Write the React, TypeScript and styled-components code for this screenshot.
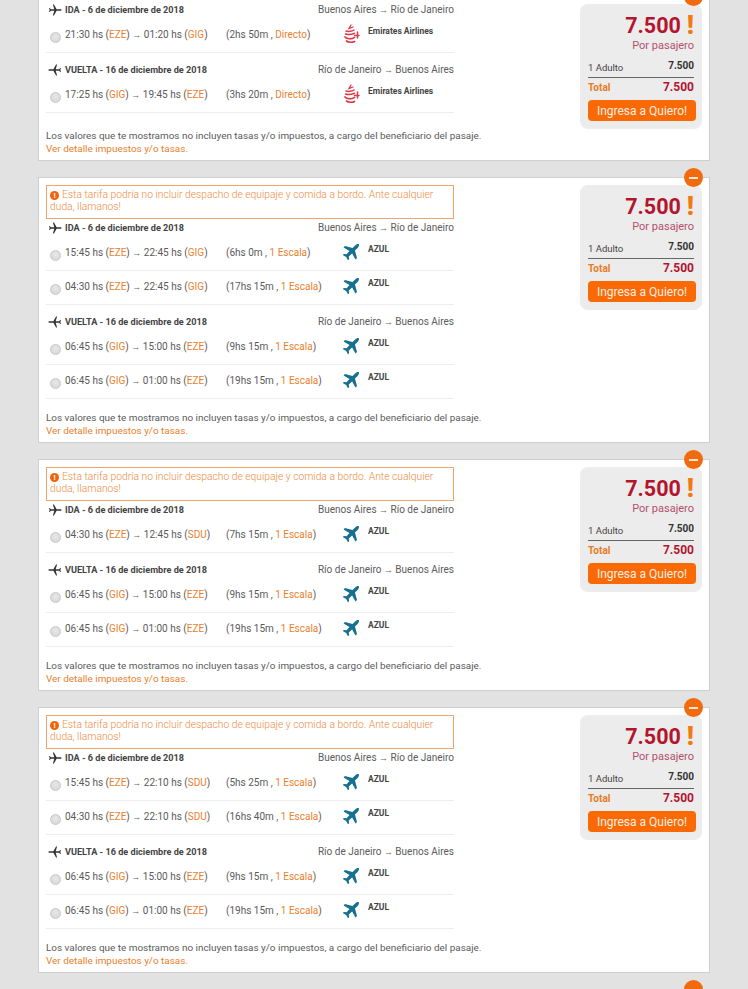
import * as React from 'react';
import styled, { createGlobalStyle } from 'styled-components';

const GlobalStyle = createGlobalStyle`
  html, body {
    margin: 0;
    padding: 0;
    background: #e2e2e2;
  }
  #root {
    height: 989px;
    overflow: hidden;
  }
`;

const List = styled.div`
  display: flex;
  flex-direction: column;
  gap: 16px;
  margin-top: -4px;
  padding: 0 38px;
  font-family: Roboto, "Liberation Sans", sans-serif;
  color: #4a4a4a;
`;

const Card = styled.div`
  position: relative;
  display: flex;
  justify-content: space-between;
  box-sizing: border-box;
  width: 672px;
  background: #fff;
  border: 1px solid #cfcfcf;
`;

const Toggle = styled.div`
  position: absolute;
  top: -10px;
  right: 6px;
  display: flex;
  align-items: center;
  justify-content: center;
  width: 19px;
  height: 19px;
  border-radius: 50%;
  background: #f26a0e;

  &::before {
    content: '';
    width: 9px;
    height: 2px;
    background: #ffe6d4;
  }
`;

const Main = styled.div<{ $bare?: boolean }>`
  width: 408px;
  margin-left: 7px;
  padding-top: ${(p) => (p.$bare ? '4px' : '7px')};
`;

const Notice = styled.div`
  box-sizing: border-box;
  height: 34px;
  padding: 3px 3px 0;
  border: 1px solid #f2a468;
  font-size: 10.3px;
  font-weight: 300;
  line-height: 12px;
  color: #ee8a3e;
`;

const NoticeIcon = styled.span`
  display: inline-block;
  width: 9px;
  height: 9px;
  margin-right: 3px;
  border-radius: 50%;
  background: #f0630a;
  color: #fff;
  font-size: 8px;
  font-weight: 700;
  line-height: 9px;
  text-align: center;
`;

const Section = styled.div`
  & + & {
    margin-top: 8px;
  }
`;

const LegHeader = styled.div`
  display: flex;
  align-items: center;
  justify-content: space-between;
  height: 18px;
`;

const LegTitle = styled.div`
  display: flex;
  align-items: center;
  gap: 3px;
  padding-left: 2px;
  font-size: 9.15px;
  font-weight: 700;
  color: #444;
`;

const Route = styled.div`
  margin-top: -1px;
  font-size: 10px;
  color: #5c5c5c;
`;

const Arrow = styled.span`
  font-size: 9px;
  color: #666;
`;

const DirectionPlane = styled.svg<{ $back?: boolean }>`
  width: 14px;
  height: 14px;
  fill: #333;
  transform: ${(p) => (p.$back ? 'scaleX(-1)' : 'none')};
`;

const Row = styled.div`
  display: flex;
  box-sizing: border-box;
  height: 34px;
  border-bottom: 1px solid #eeeeee;
`;

const Radio = styled.span`
  flex: none;
  box-sizing: border-box;
  width: 11px;
  height: 11px;
  margin: 13px 4px 0 4px;
  border: 1px solid #c8c8c8;
  border-radius: 50%;
  background: radial-gradient(circle at 50% 40%, #e8e8e8, #d4d4d4);
`;

const Times = styled.div`
  flex: none;
  width: 161px;
  padding-top: 9px;
  font-size: 10px;
  line-height: 14px;
  color: #5a5a5a;
  white-space: nowrap;
`;

const Duration = styled(Times)`
  width: 114px;
`;

const Highlight = styled.span`
  color: #e97f2e;
`;

const LogoBox = styled.div`
  flex: none;
  display: flex;
  align-items: center;
  justify-content: center;
  width: 22px;
  height: 22px;
  margin-top: 4px;
`;

const AirlineName = styled.div`
  margin: 6px 0 0 6px;
  font-size: 8.5px;
  font-weight: 700;
  line-height: 12px;
  color: #444;
  white-space: nowrap;
`;

const Disclaimer = styled.div<{ $bare?: boolean }>`
  margin-top: ${(p) => (p.$bare ? '16px' : '12px')};
  padding-bottom: 5px;
  font-size: 9.93px;
  line-height: 13px;
  color: #5a5a5a;
  white-space: nowrap;
`;

const DetailLink = styled.div`
  color: #e97f2e;
`;

const PriceBox = styled.div`
  flex: none;
  align-self: flex-start;
  box-sizing: border-box;
  width: 122px;
  height: 125px;
  margin: 7px 7px 0 0;
  padding: 7px 8px 0 8px;
  border-radius: 8px;
  background: #ececec;
`;

const BigPrice = styled.div`
  display: flex;
  align-items: center;
  justify-content: flex-end;
  gap: 6px;
  height: 28px;
  font-size: 21.5px;
  font-weight: 700;
  color: #b3152f;
`;

const Bang = styled.span`
  font-size: 26px;
  font-weight: 900;
  color: #f2790f;
`;

const PerPassenger = styled.div`
  font-size: 11px;
  line-height: 13px;
  text-align: right;
  color: #b5506c;
`;

const Line = styled.div<{ $total?: boolean }>`
  display: flex;
  align-items: center;
  justify-content: space-between;
  height: ${(p) => (p.$total ? '18px' : '19px')};
  margin-top: ${(p) => (p.$total ? '0' : '4px')};
  border-bottom: ${(p) => (p.$total ? '0' : '1px solid #666')};
  padding-bottom: ${(p) => (p.$total ? '0' : '2px')};
`;

const LineLabel = styled.span<{ $total?: boolean }>`
  margin-top: ${(p) => (p.$total ? '0' : '4px')};
  font-size: ${(p) => (p.$total ? '10px' : '9.5px')};
  font-weight: ${(p) => (p.$total ? 700 : 400)};
  color: ${(p) => (p.$total ? '#ea7a22' : '#444')};
`;

const LineValue = styled.span<{ $total?: boolean }>`
  font-size: ${(p) => (p.$total ? '12px' : '10px')};
  font-weight: 700;
  color: ${(p) => (p.$total ? '#b3152f' : '#333')};
`;

const BuyButton = styled.button`
  display: block;
  box-sizing: border-box;
  width: 108px;
  height: 21px;
  margin-top: 4px;
  padding: 0;
  border: 0;
  border-radius: 4px;
  background: #f96a06;
  color: #fdeee2;
  font-family: inherit;
  font-size: 12px;
`;

const planePath =
  'M23.5 12c0-.9-1.2-1.4-2.3-1.4h-6.4L10.2 2.5H8.4l2.4 8.1H4.900L3.100 8.400H1.800L2.900 12l-1.100 3.600h1.300l1.800-2.200h5.900l-2.400 8.100h1.800l4.600-8.100h6.400c1.100 0 2.300-.5 2.300-1.400z';

const azulPath =
  'M22.500 1.500c-1.400-.6-3.600.3-5 1.700l-3.500 3.500L4 4 2 6l8 4.500-4 4.500-3.500-.5L1 16l4.500 2.500L8 23l1.500-1.500L9 18l4.500-4 4.500 8 2-2-2.700-10 3.500-3.500c1.400-1.400 2.300-3.600 1.700-5z';

const Direction = ({ back }: { back?: boolean }) => (
  <DirectionPlane $back={back} viewBox="0 0 24 24">
    <path d={planePath} />
  </DirectionPlane>
);

const AzulLogo = () => (
  <svg width="18" height="18" viewBox="0 0 24 24" fill="#17708f">
    <path d={azulPath} />
  </svg>
);

const EmiratesLogo = () => (
  <svg width="17" height="20" viewBox="0 0 17 20" fill="none" stroke="#dc3a48" strokeLinecap="round">
    <path d="M8 1 6 4.500l4-1.500" strokeWidth="1.300" />
    <path d="M3 7c2 .8 6 .4 8-1" strokeWidth="1.500" />
    <path d="M2.500 10c3 1 6 .5 9-.8M14.500 8v6M11.500 11.500h4.500" strokeWidth="1.500" />
    <path d="M2 13c1.500 2.300 7 2.300 9.500.4" strokeWidth="1.700" />
    <path d="M3.500 17c2 1.600 6 1.600 8 .4" strokeWidth="1.700" />
  </svg>
);

const Code = ({ children }: { children: string }) => <>(<Highlight>{children}</Highlight>)</>;

interface IFlight {
  dep: string;
  from: string;
  arr: string;
  to: string;
  time: string;
  stops: string;
}

interface IFare {
  notice: boolean;
  airline: 'emirates' | 'azul';
  ida: IFlight[];
  vuelta: IFlight[];
}

const flight = (dep: string, from: string, arr: string, to: string, time: string, stops = '1 Escala'): IFlight => ({
  dep,
  from,
  arr,
  to,
  time,
  stops,
});

const vueltaAzul = [
  flight('06:45', 'GIG', '15:00', 'EZE', '9hs 15m'),
  flight('06:45', 'GIG', '01:00', 'EZE', '19hs 15m'),
];

const fares: IFare[] = [
  {
    notice: false,
    airline: 'emirates',
    ida: [flight('21:30', 'EZE', '01:20', 'GIG', '2hs 50m', 'Directo')],
    vuelta: [flight('17:25', 'GIG', '19:45', 'EZE', '3hs 20m', 'Directo')],
  },
  {
    notice: true,
    airline: 'azul',
    ida: [
      flight('15:45', 'EZE', '22:45', 'GIG', '6hs 0m'),
      flight('04:30', 'EZE', '22:45', 'GIG', '17hs 15m'),
    ],
    vuelta: vueltaAzul,
  },
  {
    notice: true,
    airline: 'azul',
    ida: [flight('04:30', 'EZE', '12:45', 'SDU', '7hs 15m')],
    vuelta: vueltaAzul,
  },
  {
    notice: true,
    airline: 'azul',
    ida: [
      flight('15:45', 'EZE', '22:10', 'SDU', '5hs 25m'),
      flight('04:30', 'EZE', '22:10', 'SDU', '16hs 40m'),
    ],
    vuelta: vueltaAzul,
  },
  {
    notice: true,
    airline: 'azul',
    ida: [flight('15:45', 'EZE', '22:10', 'SDU', '5hs 25m')],
    vuelta: vueltaAzul,
  },
];

const Leg = ({ title, route, back, flights, airline }: {
  title: string;
  route: [string, string];
  back?: boolean;
  flights: IFlight[];
  airline: IFare['airline'];
}) => (
  <Section>
    <LegHeader>
      <LegTitle><Direction back={back} />{title}</LegTitle>
      <Route>{route[0]} <Arrow>→</Arrow> {route[1]}</Route>
    </LegHeader>
    {flights.map((f, i) => (
      <Row key={i}>
        <Radio />
        <Times>
          {f.dep} hs <Code>{f.from}</Code> <Arrow>→</Arrow> {f.arr} hs <Code>{f.to}</Code>
        </Times>
        <Duration>({f.time} , <Highlight>{f.stops}</Highlight>)</Duration>
        <LogoBox>{airline === 'azul' ? <AzulLogo /> : <EmiratesLogo />}</LogoBox>
        <AirlineName>{airline === 'azul' ? 'AZUL' : 'Emirates Airlines'}</AirlineName>
      </Row>
    ))}
  </Section>
);

const App = () => (
  <>
    <GlobalStyle />
    <List>
      {fares.map((fare, i) => (
        <Card key={i}>
          <Toggle />
          <Main $bare={!fare.notice}>
            {fare.notice && (
              <Notice>
                <NoticeIcon>!</NoticeIcon>
                Esta tarifa podría no incluir despacho de equipaje y comida a bordo. Ante cualquier duda, llamanos!
              </Notice>
            )}
            <Leg
              title="IDA - 6 de diciembre de 2018"
              route={['Buenos Aires', 'Río de Janeiro']}
              flights={fare.ida}
              airline={fare.airline}
            />
            <Leg
              back
              title="VUELTA - 16 de diciembre de 2018"
              route={['Río de Janeiro', 'Buenos Aires']}
              flights={fare.vuelta}
              airline={fare.airline}
            />
            <Disclaimer $bare={!fare.notice}>
              Los valores que te mostramos no incluyen tasas y/o impuestos, a cargo del beneficiario del pasaje.
              <DetailLink>Ver detalle impuestos y/o tasas.</DetailLink>
            </Disclaimer>
          </Main>
          <PriceBox>
            <BigPrice>7.500<Bang>!</Bang></BigPrice>
            <PerPassenger>Por pasajero</PerPassenger>
            <Line>
              <LineLabel>1 Adulto</LineLabel>
              <LineValue>7.500</LineValue>
            </Line>
            <Line $total>
              <LineLabel $total>Total</LineLabel>
              <LineValue $total>7.500</LineValue>
            </Line>
            <BuyButton>Ingresa a Quiero!</BuyButton>
          </PriceBox>
        </Card>
      ))}
    </List>
  </>
);

export default App;
